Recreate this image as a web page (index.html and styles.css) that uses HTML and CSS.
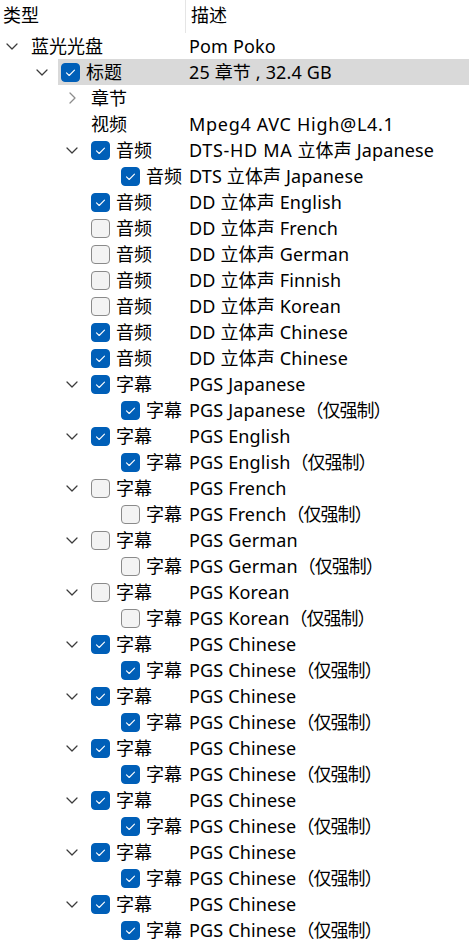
FILE: index.html
```html
<!DOCTYPE html>
<html lang="zh-CN">
<head>
<meta charset="utf-8">
<title>Tree</title>
<link rel="stylesheet" href="styles.css">
</head>
<body>
<div class="tree">
  <div class="header">
    <div class="h1">类型</div>
    <div class="h2">描述</div>
  </div>

  <div class="row l0"><div class="c1"><span class="exp"><svg class="down" width="12" height="7" viewBox="0 0 12 7"><path d="M1 1l5 5 5-5"/></svg></span><span class="name">蓝光光盘</span></div><div class="c2">Pom Poko</div></div>

  <div class="row l1 sel"><div class="c1"><span class="exp"><svg class="down" width="12" height="7" viewBox="0 0 12 7"><path d="M1 1l5 5 5-5"/></svg></span><span class="cb on"><svg viewBox="0 0 19 19"><path d="M5.5 9.8l2.7 2.7 5.3-5.3"/></svg></span><span class="name">标题</span></div><div class="c2">25 章节 , 32.4 GB</div></div>

  <div class="row l2"><div class="c1"><span class="exp"><svg class="right" width="7" height="12" viewBox="0 0 7 12"><path d="M1 1l5 5-5 5"/></svg></span><span class="name">章节</span></div><div class="c2"></div></div>

  <div class="row l2"><div class="c1"><span class="exp"></span><span class="name">视频</span></div><div class="c2 wide">Mpeg4 AVC High@L4.1</div></div>

  <div class="row l2"><div class="c1"><span class="exp"><svg class="down" width="12" height="7" viewBox="0 0 12 7"><path d="M1 1l5 5 5-5"/></svg></span><span class="cb on"><svg viewBox="0 0 19 19"><path d="M5.5 9.8l2.7 2.7 5.3-5.3"/></svg></span><span class="name">音频</span></div><div class="c2"><span class="wide">DTS-HD MA</span> 立体声 Japanese</div></div>

  <div class="row l3"><div class="c1"><span class="exp"></span><span class="cb on"><svg viewBox="0 0 19 19"><path d="M5.5 9.8l2.7 2.7 5.3-5.3"/></svg></span><span class="name">音频</span></div><div class="c2">DTS 立体声 Japanese</div></div>

  <div class="row l2"><div class="c1"><span class="exp"></span><span class="cb on"><svg viewBox="0 0 19 19"><path d="M5.5 9.8l2.7 2.7 5.3-5.3"/></svg></span><span class="name">音频</span></div><div class="c2">DD 立体声 English</div></div>

  <div class="row l2"><div class="c1"><span class="exp"></span><span class="cb"></span><span class="name">音频</span></div><div class="c2">DD 立体声 French</div></div>

  <div class="row l2"><div class="c1"><span class="exp"></span><span class="cb"></span><span class="name">音频</span></div><div class="c2">DD 立体声 German</div></div>

  <div class="row l2"><div class="c1"><span class="exp"></span><span class="cb"></span><span class="name">音频</span></div><div class="c2">DD 立体声 Finnish</div></div>

  <div class="row l2"><div class="c1"><span class="exp"></span><span class="cb"></span><span class="name">音频</span></div><div class="c2">DD 立体声 Korean</div></div>

  <div class="row l2"><div class="c1"><span class="exp"></span><span class="cb on"><svg viewBox="0 0 19 19"><path d="M5.5 9.8l2.7 2.7 5.3-5.3"/></svg></span><span class="name">音频</span></div><div class="c2">DD 立体声 Chinese</div></div>

  <div class="row l2"><div class="c1"><span class="exp"></span><span class="cb on"><svg viewBox="0 0 19 19"><path d="M5.5 9.8l2.7 2.7 5.3-5.3"/></svg></span><span class="name">音频</span></div><div class="c2">DD 立体声 Chinese</div></div>

  <div class="row l2"><div class="c1"><span class="exp"><svg class="down" width="12" height="7" viewBox="0 0 12 7"><path d="M1 1l5 5 5-5"/></svg></span><span class="cb on"><svg viewBox="0 0 19 19"><path d="M5.5 9.8l2.7 2.7 5.3-5.3"/></svg></span><span class="name">字幕</span></div><div class="c2">PGS Japanese</div></div>
  <div class="row l3"><div class="c1"><span class="exp"></span><span class="cb on"><svg viewBox="0 0 19 19"><path d="M5.5 9.8l2.7 2.7 5.3-5.3"/></svg></span><span class="name">字幕</span></div><div class="c2">PGS Japanese<span class="forced">（仅强制）</span></div></div>

  <div class="row l2"><div class="c1"><span class="exp"><svg class="down" width="12" height="7" viewBox="0 0 12 7"><path d="M1 1l5 5 5-5"/></svg></span><span class="cb on"><svg viewBox="0 0 19 19"><path d="M5.5 9.8l2.7 2.7 5.3-5.3"/></svg></span><span class="name">字幕</span></div><div class="c2">PGS English</div></div>
  <div class="row l3"><div class="c1"><span class="exp"></span><span class="cb on"><svg viewBox="0 0 19 19"><path d="M5.5 9.8l2.7 2.7 5.3-5.3"/></svg></span><span class="name">字幕</span></div><div class="c2">PGS English<span class="forced">（仅强制）</span></div></div>

  <div class="row l2"><div class="c1"><span class="exp"><svg class="down" width="12" height="7" viewBox="0 0 12 7"><path d="M1 1l5 5 5-5"/></svg></span><span class="cb"></span><span class="name">字幕</span></div><div class="c2">PGS French</div></div>
  <div class="row l3"><div class="c1"><span class="exp"></span><span class="cb"></span><span class="name">字幕</span></div><div class="c2">PGS French<span class="forced">（仅强制）</span></div></div>

  <div class="row l2"><div class="c1"><span class="exp"><svg class="down" width="12" height="7" viewBox="0 0 12 7"><path d="M1 1l5 5 5-5"/></svg></span><span class="cb"></span><span class="name">字幕</span></div><div class="c2">PGS German</div></div>
  <div class="row l3"><div class="c1"><span class="exp"></span><span class="cb"></span><span class="name">字幕</span></div><div class="c2">PGS German<span class="forced">（仅强制）</span></div></div>

  <div class="row l2"><div class="c1"><span class="exp"><svg class="down" width="12" height="7" viewBox="0 0 12 7"><path d="M1 1l5 5 5-5"/></svg></span><span class="cb"></span><span class="name">字幕</span></div><div class="c2">PGS Korean</div></div>
  <div class="row l3"><div class="c1"><span class="exp"></span><span class="cb"></span><span class="name">字幕</span></div><div class="c2">PGS Korean<span class="forced">（仅强制）</span></div></div>

  <div class="row l2"><div class="c1"><span class="exp"><svg class="down" width="12" height="7" viewBox="0 0 12 7"><path d="M1 1l5 5 5-5"/></svg></span><span class="cb on"><svg viewBox="0 0 19 19"><path d="M5.5 9.8l2.7 2.7 5.3-5.3"/></svg></span><span class="name">字幕</span></div><div class="c2">PGS Chinese</div></div>
  <div class="row l3"><div class="c1"><span class="exp"></span><span class="cb on"><svg viewBox="0 0 19 19"><path d="M5.5 9.8l2.7 2.7 5.3-5.3"/></svg></span><span class="name">字幕</span></div><div class="c2">PGS Chinese<span class="forced">（仅强制）</span></div></div>

  <div class="row l2"><div class="c1"><span class="exp"><svg class="down" width="12" height="7" viewBox="0 0 12 7"><path d="M1 1l5 5 5-5"/></svg></span><span class="cb on"><svg viewBox="0 0 19 19"><path d="M5.5 9.8l2.7 2.7 5.3-5.3"/></svg></span><span class="name">字幕</span></div><div class="c2">PGS Chinese</div></div>
  <div class="row l3"><div class="c1"><span class="exp"></span><span class="cb on"><svg viewBox="0 0 19 19"><path d="M5.5 9.8l2.7 2.7 5.3-5.3"/></svg></span><span class="name">字幕</span></div><div class="c2">PGS Chinese<span class="forced">（仅强制）</span></div></div>

  <div class="row l2"><div class="c1"><span class="exp"><svg class="down" width="12" height="7" viewBox="0 0 12 7"><path d="M1 1l5 5 5-5"/></svg></span><span class="cb on"><svg viewBox="0 0 19 19"><path d="M5.5 9.8l2.7 2.7 5.3-5.3"/></svg></span><span class="name">字幕</span></div><div class="c2">PGS Chinese</div></div>
  <div class="row l3"><div class="c1"><span class="exp"></span><span class="cb on"><svg viewBox="0 0 19 19"><path d="M5.5 9.8l2.7 2.7 5.3-5.3"/></svg></span><span class="name">字幕</span></div><div class="c2">PGS Chinese<span class="forced">（仅强制）</span></div></div>

  <div class="row l2"><div class="c1"><span class="exp"><svg class="down" width="12" height="7" viewBox="0 0 12 7"><path d="M1 1l5 5 5-5"/></svg></span><span class="cb on"><svg viewBox="0 0 19 19"><path d="M5.5 9.8l2.7 2.7 5.3-5.3"/></svg></span><span class="name">字幕</span></div><div class="c2">PGS Chinese</div></div>
  <div class="row l3"><div class="c1"><span class="exp"></span><span class="cb on"><svg viewBox="0 0 19 19"><path d="M5.5 9.8l2.7 2.7 5.3-5.3"/></svg></span><span class="name">字幕</span></div><div class="c2">PGS Chinese<span class="forced">（仅强制）</span></div></div>

  <div class="row l2"><div class="c1"><span class="exp"><svg class="down" width="12" height="7" viewBox="0 0 12 7"><path d="M1 1l5 5 5-5"/></svg></span><span class="cb on"><svg viewBox="0 0 19 19"><path d="M5.5 9.8l2.7 2.7 5.3-5.3"/></svg></span><span class="name">字幕</span></div><div class="c2">PGS Chinese</div></div>
  <div class="row l3"><div class="c1"><span class="exp"></span><span class="cb on"><svg viewBox="0 0 19 19"><path d="M5.5 9.8l2.7 2.7 5.3-5.3"/></svg></span><span class="name">字幕</span></div><div class="c2">PGS Chinese<span class="forced">（仅强制）</span></div></div>

  <div class="row l2"><div class="c1"><span class="exp"><svg class="down" width="12" height="7" viewBox="0 0 12 7"><path d="M1 1l5 5 5-5"/></svg></span><span class="cb on"><svg viewBox="0 0 19 19"><path d="M5.5 9.8l2.7 2.7 5.3-5.3"/></svg></span><span class="name">字幕</span></div><div class="c2">PGS Chinese</div></div>
  <div class="row l3"><div class="c1"><span class="exp"></span><span class="cb on"><svg viewBox="0 0 19 19"><path d="M5.5 9.8l2.7 2.7 5.3-5.3"/></svg></span><span class="name">字幕</span></div><div class="c2">PGS Chinese<span class="forced">（仅强制）</span></div></div>

  <div class="row l2"><div class="c1"><span class="exp"><svg class="down" width="12" height="7" viewBox="0 0 12 7"><path d="M1 1l5 5 5-5"/></svg></span><span class="cb"></span></div><div class="c2"></div></div>
</div>
</body>
</html>
```

FILE: styles.css
```css
html, body {
  margin: 0;
  padding: 0;
  background: #ffffff;
}

.tree {
  width: 469px;
  height: 947px;
  overflow: hidden;
  font-family: "Noto Sans", "Noto Sans CJK SC", sans-serif;
  font-size: 18px;
  color: #000000;
}

.header {
  display: flex;
  height: 33px;
}

.h1 {
  width: 182px;
  padding-left: 3px;
  border-right: 1px solid #e5e5e5;
  line-height: 31px;
}

.h2 {
  flex: 1;
  padding-left: 5px;
  line-height: 31px;
}

.row {
  display: flex;
  height: 26px;
  align-items: center;
  white-space: nowrap;
}

.row.sel {
  background: linear-gradient(to right, transparent 58px, #d9d9d9 58px);
}

.c1 {
  width: 186px;
  flex: none;
  display: flex;
  align-items: center;
  box-sizing: border-box;
  overflow: hidden;
}

.l0 .c1 { padding-left: 1px; }
.l1 .c1 { padding-left: 31px; }
.l2 .c1 { padding-left: 61px; }
.l3 .c1 { padding-left: 91px; }

.c2 {
  flex: 1;
  padding-left: 3px;
  line-height: 26px;
  letter-spacing: 0.15px;
}

.wide {
  letter-spacing: 0.7px;
}

.forced {
  letter-spacing: -1px;
}

.exp {
  width: 22px;
  margin-right: 8px;
  flex: none;
  display: flex;
  justify-content: center;
  align-items: center;
}

.exp svg path {
  fill: none;
  stroke-width: 1.25;
  stroke-linecap: round;
  stroke-linejoin: round;
}

.exp .down path { stroke: #3c3c3c; }
.exp .right path { stroke: #8c8c8c; }

.cb {
  width: 19px;
  height: 19px;
  flex: none;
  box-sizing: border-box;
  border-radius: 4px;
  border: 1px solid #8a8a8a;
  background: #f3f3f3;
  margin-right: 6px;
  display: block;
}

.cb.on {
  background: #005fb8;
  border-color: #005fb8;
}

.cb svg {
  display: block;
  width: 19px;
  height: 19px;
  margin: -1px;
}

.cb svg path {
  fill: none;
  stroke: #ffffff;
  stroke-width: 1.1;
  stroke-linecap: round;
  stroke-linejoin: round;
}

.name {
  line-height: 26px;
}
```
